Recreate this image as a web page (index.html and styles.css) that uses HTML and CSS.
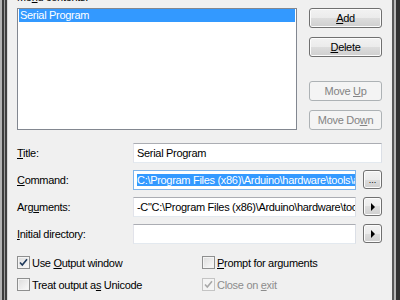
FILE: index.html
```html
<!DOCTYPE html>
<html lang="en">
  <head>
    <meta charset="UTF-8" />
    <title>External Tools</title>
    <link rel="stylesheet" href="styles.css">
  </head>
  <body>
    <div class="window">
      <div class="edge-left"></div>
      <div class="dialog">
        <!-- list + buttons -->
        <div class="top">
          <div class="list-col">
            <div class="caption">Me<u>n</u>u contents:</div>
            <div class="listbox">
              <div class="item selected">Serial Program</div>
            </div>
          </div>
          <div class="btn-col">
            <div class="btn"><span><u>A</u>dd</span></div>
            <div class="btn btn-delete"><span><u>D</u>elete</span></div>
            <div class="btn disabled btn-up"><span>Move <u>U</u>p</span></div>
            <div class="btn disabled btn-down"><span>Move Do<u>w</u>n</span></div>
          </div>
        </div>

        <!-- fields -->
        <div class="fields">
          <div class="label"><u>T</u>itle:</div>
          <div class="textbox wide">Serial Program</div>

          <div class="label"><u>C</u>ommand:</div>
          <div class="textbox focus"><span class="sel">C:\Program Files (x86)\Arduino\hardware\tools\avr\bin\avrdude.exe</span></div>
          <div class="btn small"><span class="dots">...</span></div>

          <div class="label">Arg<u>u</u>ments:</div>
          <div class="textbox">-C"C:\Program Files (x86)\Arduino\hardware\tools\avr\etc\avrdude.conf"</div>
          <div class="btn small"><span class="arrow"></span></div>

          <div class="label"><u>I</u>nitial directory:</div>
          <div class="textbox"></div>
          <div class="btn small"><span class="arrow"></span></div>
        </div>

        <!-- options -->
        <div class="checks">
          <div class="check">
            <span class="box">
              <svg width="11" height="11" viewBox="0 0 11 11"><path d="M2 5.5 L4.3 8 L9 2.2" fill="none" stroke="#1e395b" stroke-width="1.6"/></svg>
            </span>
            <span>Use <u>O</u>utput window</span>
          </div>
          <div class="check">
            <span class="box"></span>
            <span><u>P</u>rompt for arguments</span>
          </div>
          <div class="check">
            <span class="box"></span>
            <span>Treat output a<u>s</u> Unicode</span>
          </div>
          <div class="check disabled">
            <span class="box">
              <svg width="11" height="11" viewBox="0 0 11 11"><path d="M2 5.5 L4.3 8 L9 2.2" fill="none" stroke="#a8a8a8" stroke-width="1.6"/></svg>
            </span>
            <span>Close on <u>e</u>xit</span>
          </div>
        </div>
      </div>
      <div class="edge-right"></div>
    </div>
  </body>
</html>
```
FILE: styles.css
```css
* {
  box-sizing: border-box;
}
html, body {
  margin: 0;
  height: 100%;
}
body {
  font-family: "Liberation Sans", Arial, sans-serif;
  font-size: 11px;
  letter-spacing: -0.3px;
  color: #000;
  background-color: #f0f0f0;
  overflow: hidden;
}
.window {
  display: flex;
  height: 300px;
}
.edge-left {
  width: 8px;
  background: linear-gradient(to right, #b4b4b4 0 2px, #3c3c3c 2px 4px, #9c9c9c 4px 5px, #404040 5px 7px, #d8d8d8 7px 8px);
}
.edge-right {
  width: 8px;
  background: linear-gradient(to right, #5a5a5a 0 2px, #b8b8b8 2px 4px, #333 4px 8px);
}
.dialog {
  flex: 1;
  padding: 0 10px 0 9px;
}
.top {
  display: flex;
  gap: 12px;
}
.list-col {
  width: 280px;
}
.caption {
  margin-top: -10px;
  height: 14px;
  line-height: 14px;
}
.listbox {
  margin-top: 4px;
  height: 122px;
  border: 1px solid #828790;
  background-color: #fff;
  padding: 0 1px;
}
.item {
  height: 13px;
  line-height: 13px;
  padding-left: 1px;
}
.selected {
  background-color: #3399ff;
  color: #fff;
}
.btn-col {
  width: 73px;
  display: flex;
  flex-direction: column;
  padding-top: 8px;
}
.btn {
  height: 20px;
  border: 1px solid #707070;
  border-radius: 3px;
  background: linear-gradient(#f2f2f2, #ebebeb 50%, #dddddd 50%, #cfcfcf);
  box-shadow: inset 0 0 0 1px #fcfcfc;
  display: flex;
  align-items: center;
  justify-content: center;
}
.btn-delete { margin-top: 9px; }
.btn-up { margin-top: 24px; }
.btn-down { margin-top: 9px; }
.btn.disabled {
  border-color: #adb2b5;
  background: #f4f4f4;
  box-shadow: none;
  color: #838383;
}
.fields {
  display: grid;
  grid-template-columns: 109px 1fr 19px;
  column-gap: 7px;
  row-gap: 7px;
  margin-top: 13px;
}
.label {
  align-self: center;
}
.textbox {
  height: 20px;
  border: 1px solid;
  border-color: #abadb3 #dbdfe6 #e3e9ef #e2e3ea;
  background-color: #fff;
  padding: 0 3px;
  line-height: 18px;
  white-space: nowrap;
  overflow: hidden;
}
.textbox.wide {
  grid-column: 2 / 4;
}
.textbox.focus {
  border-color: #7eb4ea;
}
.sel {
  background-color: #3399ff;
  color: #fff;
}
.btn.small {
  width: 19px;
  height: 19px;
}
.dots {
  font-size: 9px;
  line-height: 9px;
  letter-spacing: 0;
  padding-top: 2px;
}
.arrow {
  width: 0;
  height: 0;
  border-left: 4px solid #000;
  border-top: 4px solid transparent;
  border-bottom: 4px solid transparent;
  margin-left: 1px;
}
.checks {
  display: grid;
  grid-template-columns: 185px 1fr;
  row-gap: 9px;
  margin-top: 12px;
}
.check {
  display: flex;
  align-items: center;
  gap: 2px;
  height: 13px;
}
.box {
  width: 13px;
  height: 13px;
  border: 1px solid #8e8f8f;
  background: linear-gradient(135deg, #dcdcdc, #fbfbfb);
  box-shadow: inset 0 0 0 1px #f4f4f4;
  display: flex;
  align-items: center;
  justify-content: center;
}
.check.disabled {
  color: #8d8d8d;
}
.check.disabled .box {
  border-color: #c4c4c4;
  background: #f4f4f4;
}
```
